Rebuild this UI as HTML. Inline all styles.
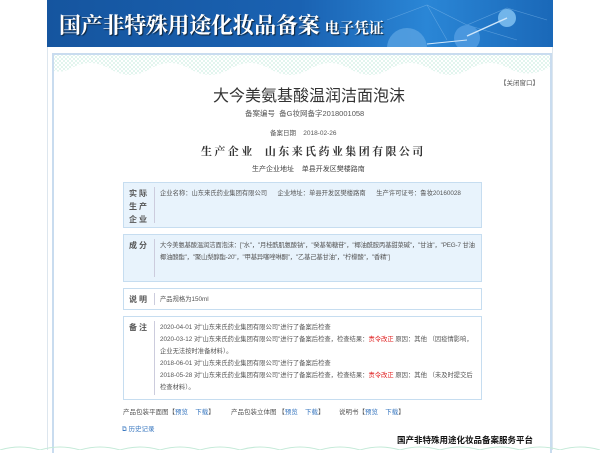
<!DOCTYPE html>
<html><head><meta charset="utf-8"><style>
*{margin:0;padding:0;box-sizing:border-box}
body{width:600px;height:450px;background:#fff;position:relative;overflow:hidden;font-family:"Liberation Sans","Noto Sans CJK SC",sans-serif;color:#444}
.abs{position:absolute;white-space:nowrap}
#banner{left:47px;top:0;width:506px;height:47px;background:linear-gradient(90deg,#15559f 0%,#1a62b2 50%,#2a86d6 75%,#1a68b8 100%);overflow:hidden}
#outer{left:47px;top:47px;width:506px;height:403px;border-left:1px solid #dde6ee;border-right:1px solid #dde6ee}
#card{left:52px;top:53px;width:500px;height:400px;border:2px solid #c9dcef;border-bottom:none}
.box{position:absolute;left:123px;width:359px;border:1px solid #c6ddf0}
.lab{position:absolute;left:5px;top:4px;width:20px;font-size:8px;font-weight:bold;line-height:13px;color:#555;letter-spacing:2px}
.div{position:absolute;left:30px;top:4px;bottom:4px;border-left:1px solid #ccd}
.txt{position:absolute;left:36px;top:5px;right:4px;font-size:6.3px;line-height:12px;color:#555}
.red{color:#e02020}
a{color:#3a78c0;text-decoration:none}
</style></head><body>
<div id="banner" class="abs">
<svg width="506" height="47" style="position:absolute;left:0;top:0">
<g stroke="#7fb8ea" stroke-width="0.6" fill="none" opacity="0.6">
<path d="M340 20 L380 5 L420 25 L460 8 L500 20 M380 5 L400 40 M420 25 L470 40"/>
</g>
<circle cx="360" cy="48" r="20" fill="#5fa6e4" opacity="0.7"/>
<circle cx="420" cy="38" r="13" fill="#4f9ae0" opacity="0.9"/>
<circle cx="460" cy="18" r="9" fill="#7bbcee" opacity="0.9"/>
<path d="M420 36 L460 18" stroke="#cfe6fa" stroke-width="1.5"/>
<path d="M380 44 L420 40" stroke="#cfe6fa" stroke-width="1"/>
</svg>
<div class="abs" style="left:12px;top:9px;font-family:'Liberation Serif','Noto Serif CJK SC',serif;font-weight:bold;font-size:22px;color:#fff;letter-spacing:-0.3px;text-shadow:1px 1px 1px #123">国产非特殊用途化妆品备案 <span style="font-size:15px">电子凭证</span></div>
</div>
<div id="outer" class="abs"></div>
<div id="card" class="abs">
<svg width="496" height="28" style="position:absolute;left:0;top:0">
<defs><pattern id="p" width="4" height="4" patternUnits="userSpaceOnUse"><path d="M0 4 L4 0 M0 0 L4 4" stroke="#b8e6d6" stroke-width="0.5"/></pattern></defs>
<path d="M0 0 H496 V12 Q476 24 456 14 Q436 2 416 14 Q396 26 376 14 Q356 2 336 14 Q316 26 296 14 Q276 2 256 14 Q236 26 216 14 Q196 2 176 14 Q156 26 136 14 Q116 2 96 14 Q76 26 56 14 Q36 2 16 14 Q8 18 0 16 Z" fill="url(#p)" opacity="0.8"/>
</svg>
</div>
<div class="abs" style="left:500px;top:77px;font-size:6.5px;color:#555">【关闭窗口】</div>
<div class="abs" style="left:213px;top:82px;font-size:16px;color:#333">大今美氨基酸温润洁面泡沫</div>
<div class="abs" style="left:245px;top:108px;font-size:7.5px;color:#555">备案编号&nbsp; 备G妆网备字2018001058</div>
<div class="abs" style="left:270px;top:127px;font-size:6.5px;color:#555">备案日期&nbsp;&nbsp;&nbsp; 2018-02-26</div>
<div class="abs" style="left:201px;top:143px;font-size:11px;font-weight:bold;letter-spacing:2.4px;color:#333;font-family:'Liberation Serif','Noto Serif CJK SC',serif">生产企业&nbsp; 山东来氏药业集团有限公司</div>
<div class="abs" style="left:252px;top:164px;font-size:7px;color:#444">生产企业地址&nbsp;&nbsp;&nbsp; 单县开发区樊楼路南</div>

<div class="box" style="top:182px;height:46px;background:#e8f3fc"><div class="lab">实际生产企业</div><div class="div"></div><div class="txt">企业名称：山东来氏药业集团有限公司&nbsp;&nbsp;&nbsp;&nbsp;&nbsp; 企业地址：单县开发区樊楼路南&nbsp;&nbsp;&nbsp;&nbsp;&nbsp; 生产许可证号：鲁妆20160028</div></div>
<div class="box" style="top:234px;height:48px;background:#e8f3fc"><div class="lab">成分</div><div class="div"></div><div class="txt" style="white-space:normal;letter-spacing:-0.15px">大今美氨基酸温润洁面泡沫：["水"，"月桂酰肌氨酸钠"，"癸基葡糖苷"，"椰油酰胺丙基甜菜碱"，"甘油"，"PEG-7 甘油椰油酸酯"，"聚山梨醇酯-20"，"甲基异噻唑啉酮"，"乙基己基甘油"，"柠檬酸"，"香精"]</div></div>
<div class="box" style="top:288px;height:22px;background:#fff"><div class="lab">说明</div><div class="div"></div><div class="txt">产品规格为150ml</div></div>
<div class="box" style="top:316px;height:84px;background:#fff"><div class="lab">备注</div><div class="div"></div><div class="txt" style="white-space:normal">2020-04-01 对"山东来氏药业集团有限公司"进行了备案后检查<br>2020-03-12 对"山东来氏药业集团有限公司"进行了备案后检查，检查结果：<span class="red">责令改正</span> 原因：其他 （因疫情影响，企业无法按时准备材料）。<br>2018-06-01 对"山东来氏药业集团有限公司"进行了备案后检查<br>2018-05-28 对"山东来氏药业集团有限公司"进行了备案后检查，检查结果：<span class="red">责令改正</span> 原因：其他 （未及时提交后检查材料）。</div></div>

<div class="abs" style="left:123px;top:406px;font-size:6.5px;color:#555">产品包装平面图【<a>预览</a>&nbsp;&nbsp;&nbsp; <a>下载</a>】&nbsp;&nbsp;&nbsp;&nbsp;&nbsp;&nbsp;&nbsp;&nbsp; 产品包装立体图 【<a>预览</a>&nbsp;&nbsp;&nbsp; <a>下载</a>】&nbsp;&nbsp;&nbsp;&nbsp;&nbsp;&nbsp;&nbsp; 说明书【<a>预览</a>&nbsp;&nbsp;&nbsp; <a>下载</a>】</div>
<div class="abs" style="left:122px;top:423px;font-size:6.5px"><a>⧉ 历史记录</a></div>
<div class="abs" style="left:397px;top:434px;font-size:8.5px;font-weight:bold;color:#111">国产非特殊用途化妆品备案服务平台</div>
<svg class="abs" width="600" height="6" style="left:0;top:444px"><path d="M0 6 Q20 0 40 6 Q60 0 80 6 Q100 0 120 6 Q140 0 160 6 Q180 0 200 6 Q220 0 240 6 Q260 0 280 6 Q300 0 320 6 Q340 0 360 6 Q380 0 400 6 Q420 0 440 6 Q460 0 480 6 Q500 0 520 6 Q540 0 560 6 Q580 0 600 6" stroke="#c4ead8" fill="none"/></svg>
</body></html>
